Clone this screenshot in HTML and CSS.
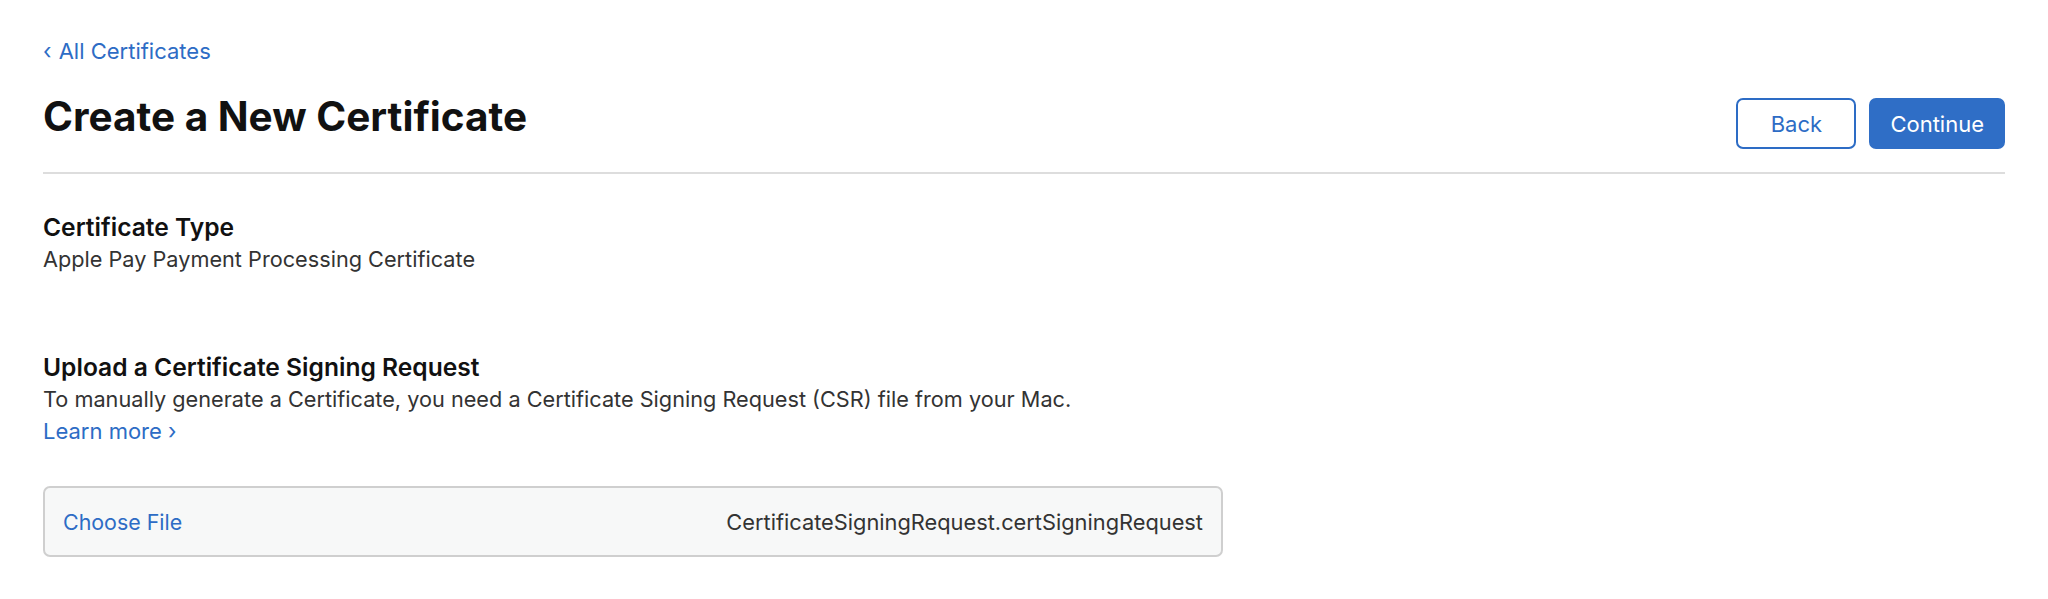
FILE: index.html
```html
<!DOCTYPE html>
<html lang="en">
<head>
<meta charset="utf-8">
<title>Create a New Certificate</title>
<link rel="stylesheet" href="styles.css">
</head>
<body>
<main class="page">
  <a class="back-link" href="#"><span class="chev">‹</span> All Certificates</a>
  <header class="header">
    <h1 class="title">Create a New Certificate</h1>
    <div class="actions">
      <button class="btn btn-secondary" type="button">Back</button>
      <button class="btn btn-primary" type="button">Continue</button>
    </div>
  </header>

  <section class="section section-type">
    <h2 class="section-title">Certificate Type</h2>
    <p class="section-text">Apple Pay Payment Processing Certificate</p>
  </section>

  <section class="section section-upload">
    <h2 class="section-title">Upload a Certificate Signing Request</h2>
    <p class="section-text">To manually generate a Certificate, you need a Certificate Signing Request (CSR) file from your Mac.</p>
    <a class="learn-more" href="#">Learn more ›</a>
  </section>

  <div class="file-box">
    <a class="choose-file" href="#">Choose File</a>
    <span class="file-name">CertificateSigningRequest.certSigningRequest</span>
  </div>
</main>
</body>
</html>
```

FILE: styles.css
```css
* {
  box-sizing: border-box;
}

html, body {
  margin: 0;
  padding: 0;
  background: #ffffff;
}

body {
  font-family: Inter, "Noto Sans", "Liberation Sans", sans-serif;
  color: #333333;
  -webkit-font-smoothing: antialiased;
}

.page {
  padding: 35px 43px 0 43px;
}

a {
  color: #2d6cc5;
  text-decoration: none;
}

.back-link {
  display: block;
  font-size: 22px;
  line-height: 32px;
}

.chev {
  display: inline-block;
  margin-right: 1px;
}

.header {
  margin-top: 26px;
  display: flex;
  justify-content: space-between;
  align-items: flex-start;
  padding-bottom: 23px;
  border-bottom: 2px solid #dddddd;
}

.title {
  margin: 0;
  font-size: 40.5px;
  line-height: 48px;
  font-weight: 700;
  color: #111111;
}

.actions {
  display: flex;
  gap: 13px;
  margin-top: 5px;
}

.btn {
  font-family: inherit;
  font-size: 22px;
  height: 51px;
  min-width: 120px;
  padding: 0 19px;
  border-radius: 7px;
  cursor: pointer;
}

.btn-secondary {
  background: #ffffff;
  color: #2d6cc5;
  border: 2px solid #2d6cc5;
}

.btn-primary {
  background: #2f6ec6;
  color: #ffffff;
  border: 2px solid #2f6ec6;
}

.section {
  display: flex;
  flex-direction: column;
}

.section-type {
  margin-top: 37px;
}

.section-upload {
  margin-top: 76px;
}

.section-title {
  margin: 0;
  font-size: 24.6px;
  line-height: 32px;
  font-weight: 600;
  color: #111111;
}

.section-text {
  margin: 0;
  font-size: 21.7px;
  line-height: 32px;
  color: #333333;
}

.learn-more {
  font-size: 22px;
  line-height: 32px;
  align-self: flex-start;
}

.file-box {
  margin-top: 39px;
  width: 1180px;
  height: 71px;
  display: flex;
  justify-content: space-between;
  align-items: center;
  padding: 0 18px;
  background: #f7f8f8;
  border: 2px solid #cfcfcf;
  border-radius: 7px;
  font-size: 21.8px;
}

.choose-file {
  font-size: 21.4px;
}

.file-name {
  color: #333333;
}
```
